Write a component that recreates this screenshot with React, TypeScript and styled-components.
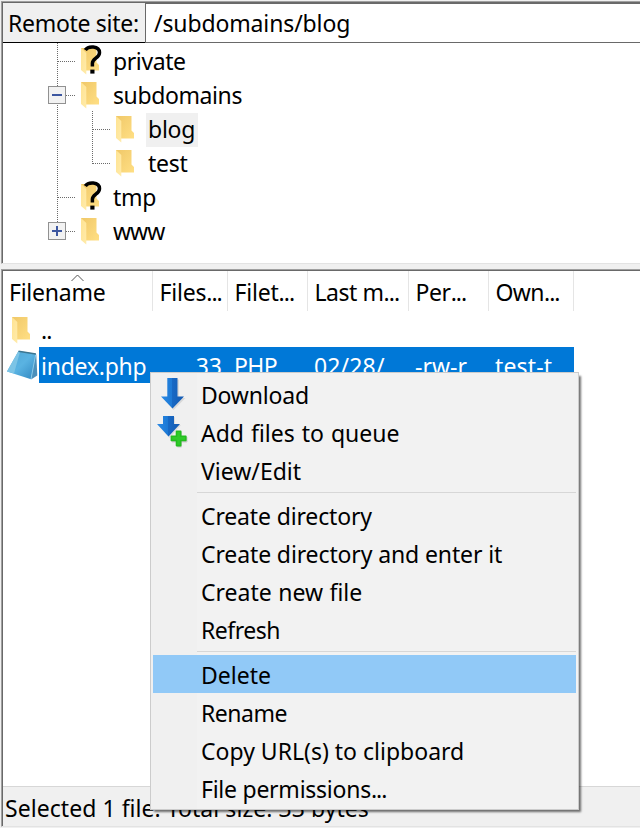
import React from 'react';
import styled, { createGlobalStyle } from 'styled-components';

const Global = createGlobalStyle`
  * { box-sizing: border-box; }
  html, body { margin: 0; padding: 0; background: #fff; }
  body { width: 640px; height: 828px; overflow: hidden; font-family: "Noto Sans", "Open Sans", sans-serif; font-size: 23px; color: #000; }
`;

const Window = styled.div`
  position: relative;
  width: 640px;
  height: 828px;
  background: #f0f0f0;
  overflow: hidden;
  display: flex;
  flex-direction: column;
  padding: 1px 0 0 1px;
`;

const Pane = styled.section<{ $h: number }>`
  height: ${(p) => p.$h}px;
  border-left: 1px solid #a0a0a0;
  border-top: 1px solid #a0a0a0;
  border-bottom: 1px solid #e3e3e3;
  display: flex;
  background: #fff;
`;

const PaneInner = styled.div`
  flex: 1;
  border-left: 1px solid #696969;
  border-top: 1px solid #696969;
  display: flex;
  flex-direction: column;
`;

const TextRun = styled.span<{ $s?: number; $w?: number }>`
  white-space: pre;
  line-height: 32px;
  letter-spacing: ${(p) => p.$s ?? 0}px;
  word-spacing: ${(p) => p.$w ?? 0}px;
`;

const Ellipsis = styled.span`
  letter-spacing: -1px;
`;

/* Text with its tracking; a trailing "..." is set tighter than the words. */
const Label = ({ text, s, ws }: { text: string; s?: number; ws?: number }) => {
  const cut = text.endsWith('...');
  return (
    <TextRun $s={s} $w={ws}>
      {cut ? text.slice(0, -3) : text}
      {cut && <Ellipsis>...</Ellipsis>}
    </TextRun>
  );
};

const SiteBar = styled.div`
  display: flex;
  height: 40px;
  flex: none;
`;

const SiteLabel = styled.div`
  width: 142px;
  background: #f0f0f0;
  border-bottom: 1px solid #000;
  padding: 4px 0 0 5px;
  white-space: pre;
`;

const SiteInput = styled.div`
  flex: 1;
  border: 1px solid #696969;
  border-right: 0;
  padding: 3px 0 0 8px;
`;

const Tree = styled.div`
  flex: 1;
  padding-top: 2px;
`;

const TreeRow = styled.div`
  height: 34px;
  display: flex;
`;

const TreeName = styled.div<{ $selected?: boolean }>`
  height: 34px;
  padding: 0 3px 0 2px;
  margin-left: -1px;
  background: ${(p) => (p.$selected ? '#f0f0f0' : 'transparent')};
`;

const Splitter = styled.div`
  height: 5px;
  flex: none;
`;

const Header = styled.div`
  display: flex;
  height: 40px;
  position: relative;
`;

const HeaderCell = styled.div<{ $w: number; $first?: boolean }>`
  width: ${(p) => p.$w}px;
  border-right: 1px solid #e5e5e5;
  padding: 5px 0 0 ${(p) => (p.$first ? 6 : 6.5)}px;
  white-space: nowrap;
  overflow: hidden;
`;

const SortMark = styled.svg`
  position: absolute;
  left: 67px;
  top: 3px;
`;

const FileRow = styled.div`
  display: flex;
  height: 36px;
`;

const FileIcon = styled.div`
  width: 36px;
  display: flex;
`;

const Cells = styled.div<{ $selected?: boolean }>`
  display: flex;
  width: 535px;
  background: ${(p) => (p.$selected ? '#0078d7' : 'transparent')};
  color: ${(p) => (p.$selected ? '#fff' : '#000')};
`;

const Cell = styled.div<{ $w: number; $right?: boolean }>`
  width: ${(p) => p.$w}px;
  flex: none;
  padding: 3px ${(p) => (p.$right ? 5 : 0)}px 0 ${(p) => (p.$right ? 0 : 7)}px;
  text-align: ${(p) => (p.$right ? 'right' : 'left')};
  white-space: nowrap;
`;

const FileName = styled(Cell)`
  padding-left: 2px;
`;

const Empty = styled.div`
  flex: 1;
`;

const Status = styled.footer`
  height: 40px;
  background: #f0f0f0;
  border-top: 1px solid #d7d7d7;
  padding: 5px 0 0 2px;
`;

const Menu = styled.div`
  position: absolute;
  left: 150px;
  top: 372px;
  width: 429px;
  height: 438px;
  border: 1px solid #ccc;
  background: linear-gradient(90deg, #f0f0f0 46px, #f2f2f2 46px);
  padding: 2px;
  box-shadow: 3px 3px 2px -1px rgba(0, 0, 0, 0.55);
`;

const MenuItem = styled.div<{ $active?: boolean }>`
  height: 38px;
  display: flex;
  background: ${(p) => (p.$active ? '#91c9f7' : 'transparent')};
`;

const MenuIcon = styled.div`
  width: 48px;
  display: flex;
`;

const MenuText = styled.div`
  padding-top: 4px;
`;

const MenuSeparator = styled.div`
  height: 7px;
  padding: 3px 0 3px 44px;
  &::before { content: ''; display: block; height: 1px; background: #d7d7d7; }
`;

const GradientSheet = styled.svg`
  position: absolute;
`;

const Gradients = () => (
  <GradientSheet width="0" height="0">
    <defs>
      <linearGradient id="back" x1="0" y1="0" x2="1" y2="1">
        <stop offset="0" stopColor="#f0c869" /><stop offset="1" stopColor="#ffdf84" />
      </linearGradient>
      <linearGradient id="flap" x1="0" y1="0" x2="1" y2="1">
        <stop offset="0" stopColor="#ffe391" /><stop offset="1" stopColor="#ffebab" />
      </linearGradient>
      <linearGradient id="note" x1="0" y1="0" x2="1" y2="1">
        <stop offset="0" stopColor="#4fa6d4" /><stop offset="0.5" stopColor="#5ab3e2" /><stop offset="1" stopColor="#2f86c0" />
      </linearGradient>
      <linearGradient id="arrow" x1="0" y1="0" x2="1" y2="0">
        <stop offset="0" stopColor="#2b8ae6" /><stop offset="0.49" stopColor="#1c78d4" /><stop offset="0.5" stopColor="#1768c4" /><stop offset="1" stopColor="#145ab2" />
      </linearGradient>
    </defs>
  </GradientSheet>
);

const FolderShape = () => (
  <>
    <path d="M1 1H16.5V15.5L19 18V23.5H6L1 22Z" fill="url(#back)" />
    <path d="M1 1L6.3 6V27.5L1 23Z" fill="url(#flap)" />
  </>
);

const Folder = ({ unknown }: { unknown?: boolean }) => (
  <svg width="32" height="34" viewBox="0 0 32 34">
    <g transform="translate(0 2)"><FolderShape /></g>
    {unknown && (
      <g fill="none" stroke="#000">
        <path d="M5.3 5C8 .8 19.3.2 19.5 7.6C19.6 13 12.4 13.2 12.4 18.2V21.4" strokeWidth="3.5" />
        <path d="M10.3 26.6H14.5" strokeWidth="4" />
      </g>
    )}
  </svg>
);

const Arrow = ({ queue }: { queue?: boolean }) => (
  <svg width="46" height="38" viewBox="153 375 46 38">
    {queue ? (
      <g transform="translate(0 -38)">
        <path d="M164 417H175V425H181L169.5 438L158 425H164Z" fill="#cfcfcf" opacity=".6" />
        <path d="M163 416H174V424H180L168.5 436.5L157 424H163Z" fill="url(#arrow)" />
        <path d="M177.5 432H181.5V437H187V442H181.5V447H177.5V442H172V437H177.5Z" fill="#bbb" stroke="#ccc" strokeLinejoin="round" />
        <path d="M176.5 431.2H180.7V436.3H185.8V440.5H180.7V445.6H176.5V440.5H171.4V436.3H176.5Z" fill="#2fca2a" stroke="#24bd20" strokeWidth="1.6" strokeLinejoin="round" />
      </g>
    ) : (
      <>
        <path d="M168.5 379.5H179V398H185.5L173.5 410L163 398H168.5Z" fill="#ccc" opacity=".65" />
        <path d="M167.3 378H177.5V396.5H184L172.5 408.5L161 396.5H167.3Z" fill="url(#arrow)" />
      </>
    )}
  </svg>
);

const Notepad = () => (
  <svg width="36" height="36" viewBox="3 347 36 36">
    <path d="M34 353L36.3 354.5L37.3 375.5L31 379.5Z" fill="#4b90bb" />
    <path d="M18.5 351L36 353.8L31 379.3L7 371.5Z" fill="url(#note)" />
    <path d="M18.5 351L20 352L14 373.5L7 371.5Z" fill="#7cc4e6" />
    <path d="M18.5 351.3L35.8 354" stroke="#3d7691" strokeWidth="1.5" />
    <path d="M35.6 355L31 379" stroke="#8ccbe9" strokeWidth="1" />
  </svg>
);

type Node = 'leaf' | 'minus' | 'plus' | 'child' | 'last';

const Branch = ({ kind }: { kind: Node }) => {
  const deep = kind === 'child' || kind === 'last';
  const box = kind === 'minus' || kind === 'plus';
  return (
    <svg width={deep ? 112 : 77} height="34" viewBox={`3 0 ${deep ? 112 : 77} 34`} overflow="visible" shapeRendering="crispEdges">
      <g stroke="#6b6b6b" strokeDasharray="1 1">
        <path d={kind === 'plus' ? 'M57.5 0V8' : 'M57.5 -2V34'} />
        {deep ? <path d={kind === 'last' ? 'M92.5 0V17' : 'M92.5 -2V34'} /> : null}
        {deep ? <path d="M93 16.5H111" /> : <path d="M58 16.5H76" />}
      </g>
      {box && (
        <>
          <rect x="48.5" y="7.5" width="17" height="17" fill="#f2f2f2" stroke="#919191" />
          <path d={kind === 'plus' ? 'M52 16H62M57 11V21' : 'M52 16H62'} stroke="#3d57a0" strokeWidth="2" />
        </>
      )}
    </svg>
  );
};

const tree: { name: string; kind: Node; unknown?: boolean; selected?: boolean; s?: number }[] = [
  { name: 'private', kind: 'leaf', unknown: true, s: -0.4 },
  { name: 'subdomains', kind: 'minus', s: -0.4 },
  { name: 'blog', kind: 'child', selected: true, s: -0.25 },
  { name: 'test', kind: 'last', s: -0.25 },
  { name: 'tmp', kind: 'leaf', unknown: true, s: -0.3 },
  { name: 'www', kind: 'plus', s: -1 },
];

const columns: { title: string; w: number; s?: number }[] = [
  { title: 'Filename', w: 150, s: -0.25 },
  { title: 'Files...', w: 75, s: -0.2 },
  { title: 'Filet...', w: 80, s: -0.2 },
  { title: 'Last m...', w: 101, s: -0.45 },
  { title: 'Per...', w: 80, s: -0.4 },
  { title: 'Own...', w: 85, s: -0.6 },
];

type Item = { text: string; icon?: 'get' | 'queue'; active?: boolean; s?: number; ws?: number };
const groups: Item[][] = [
  [
    { text: 'Download', icon: 'get', s: -0.2 },
    { text: 'Add files to queue', icon: 'queue', ws: 1 },
    { text: 'View/Edit' },
  ],
  [
    { text: 'Create directory', s: -0.15 },
    { text: 'Create directory and enter it', s: -0.12 },
    { text: 'Create new file', ws: 0.5 },
    { text: 'Refresh', s: -0.5 },
  ],
  [
    { text: 'Delete', active: true },
    { text: 'Rename', s: -0.5 },
    { text: 'Copy URL(s) to clipboard' },
    { text: 'File permissions...', s: -0.25 },
  ],
];

export default function App() {
  return (
    <Window>
      <Global />
      <Gradients />
      <Pane $h={263}>
        <PaneInner>
          <SiteBar>
            <SiteLabel><Label text="Remote site:" s={-0.3} /></SiteLabel>
            <SiteInput><Label text="/subdomains/blog" s={-0.13} /></SiteInput>
          </SiteBar>
          <Tree>
            {tree.map((n) => (
              <TreeRow key={n.name}>
                <Branch kind={n.kind} />
                <Folder unknown={n.unknown} />
                <TreeName $selected={n.selected}><Label text={n.name} s={n.s} /></TreeName>
              </TreeRow>
            ))}
          </Tree>
        </PaneInner>
      </Pane>
      <Splitter />
      <Pane $h={558}>
        <PaneInner>
          <Header>
            {columns.map((c, i) => (
              <HeaderCell key={c.title} $w={c.w} $first={i === 0}><Label text={c.title} s={c.s} /></HeaderCell>
            ))}
            <SortMark width="16" height="8"><path d="M1.5 7L7.5 1L13.5 7" fill="none" stroke="#555" /></SortMark>
          </Header>
          <FileRow>
            <FileIcon><svg width="32" height="36" viewBox="-8 -5 32 36"><FolderShape /></svg></FileIcon>
            <Cells><FileName $w={114}><Label text=".." s={-1} /></FileName></Cells>
          </FileRow>
          <FileRow>
            <FileIcon><Notepad /></FileIcon>
            <Cells $selected>
              <FileName $w={114}><Label text="index.php" s={-0.25} /></FileName>
              <Cell $w={74} $right><Label text="33" /></Cell>
              <Cell $w={80}><Label text="PHP" s={-0.6} /></Cell>
              <Cell $w={101}><Label text="02/28/" s={0.15} /></Cell>
              <Cell $w={80}><Label text="-rw-r" /></Cell>
              <Cell $w={85}><Label text="test-t" s={0.15} /></Cell>
            </Cells>
          </FileRow>
          <Empty />
          <Status><Label text="Selected 1 file. Total size: 33 bytes" s={0.05} /></Status>
        </PaneInner>
      </Pane>
      <Menu>
        {groups.map((g, i) => (
          <React.Fragment key={i}>
            {i > 0 && <MenuSeparator />}
            {g.map((m) => (
              <MenuItem key={m.text} $active={m.active}>
                <MenuIcon>{m.icon && <Arrow queue={m.icon === 'queue'} />}</MenuIcon>
                <MenuText><Label text={m.text} s={m.s} ws={m.ws} /></MenuText>
              </MenuItem>
            ))}
          </React.Fragment>
        ))}
      </Menu>
    </Window>
  );
}
